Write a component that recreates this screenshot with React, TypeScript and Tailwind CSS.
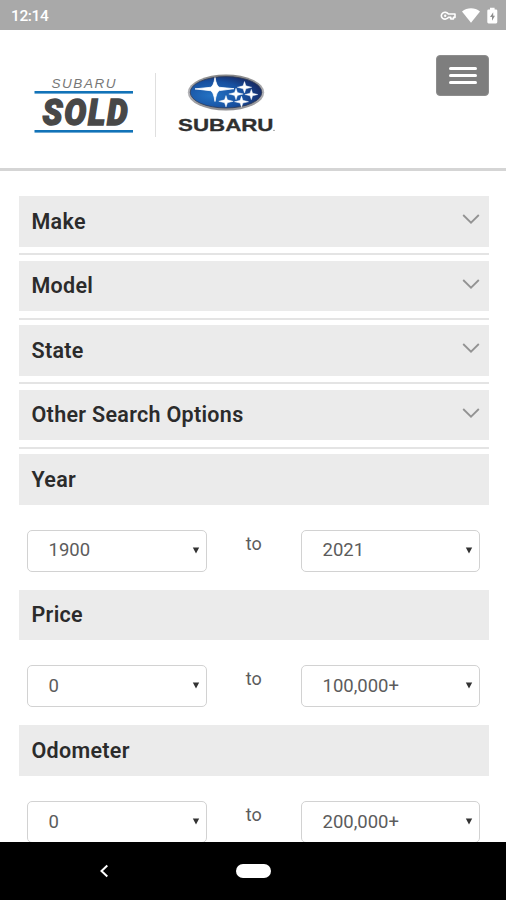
import React from "react";

interface RangeFilter {
  label: string;
  from: string;
  to: string;
}

const collapsedFilters = ["Make", "Model", "State", "Other Search Options"];

const rangeFilters: RangeFilter[] = [
  { label: "Year", from: "1900", to: "2021" },
  { label: "Price", from: "0", to: "100,000+" },
  { label: "Odometer", from: "0", to: "200,000+" },
];

const StatusBar = () => (
  <div className="flex h-[30px] shrink-0 items-center justify-between bg-[#a9a9a9] pl-[11px] pr-2 text-white">
    <span className="pt-[3px] text-[15.5px] leading-none font-medium tracking-[-0.4px]">12:14</span>
    <svg width="58" height="18" viewBox="0 0 58 18" fill="none" className="mt-px">
      {/* VPN key */}
      <path
        d="M8.400 7A3.800 3.400 0 1 0 8.400 10.400H10.800V12H13.400V10.400H15V7Z"
        stroke="#fff"
        strokeWidth="1.600"
        strokeLinejoin="round"
      />
      <circle cx="5.200" cy="8.700" r="1.200" fill="#fff" />
      {/* Wifi */}
      <path d="M22 4.600C27.200.2 34.800.2 40 4.600L31 15.800Z" fill="#fff" />
      {/* Battery */}
      <path d="M50 .8h4.600v1.700H56q1.300 0 1.300 1.300v11.300q0 1.300-1.300 1.300h-7.400q-1.300 0-1.300-1.300V3.800q0-1.300 1.300-1.300H50Z" fill="#fff" />
      <path d="M53.200 5.200 50 10h2v3.700l3-4.900h-1.800Z" fill="#8f8f8f" />
    </svg>
  </div>
);

const SoldLogo = () => (
  <svg
    width="100"
    height="64"
    viewBox="33.500 73 100 64"
    fontFamily="'Liberation Sans', sans-serif"
    className="overflow-visible"
  >
    <text x="51" y="87.500" fontSize="13.500" fontStyle="italic" fill="#777" textLength="64">
      SUBARU
    </text>
    <rect x="34" y="91" width="98.500" height="2.600" fill="#1273b8" />
    <text
      x="42"
      y="124.600"
      fontSize="37.500"
      fontFamily="Roboto, sans-serif"
      fontWeight="900"
      fontStyle="italic"
      fill="#484848"
      stroke="#484848"
      strokeWidth="1.500"
      letterSpacing="2"
      textLength="87"
      lengthAdjust="spacingAndGlyphs"
    >
      SOLD
    </text>
    <rect x="34" y="130" width="98.500" height="2.600" fill="#1273b8" />
  </svg>
);

const smallStars = [
  [244.500, 87.300, 7.200],
  [236, 94, 7.200],
  [251.300, 94.500, 6.500],
  [226, 101.300, 7.200],
  [241.500, 101.700, 7],
];

const SubaruLogo = () => (
  <svg width="100" height="64" viewBox="175 73 100 64" className="overflow-visible">
    <defs>
      <linearGradient id="rim" x1="0" y1="0" x2="0" y2="1">
        <stop offset="0" stopColor="#858585" />
        <stop offset="0.5" stopColor="#b4b4b8" />
        <stop offset="1" stopColor="#8c8c90" />
      </linearGradient>
      <radialGradient id="sky" cx="0.3" cy="0.6" r="0.75">
        <stop offset="0" stopColor="#2473c4" />
        <stop offset="0.6" stopColor="#174f9f" />
        <stop offset="1" stopColor="#18265e" />
      </radialGradient>
    </defs>
    <ellipse cx="226" cy="92.500" rx="38.200" ry="18" fill="url(#rim)" />
    <ellipse cx="226" cy="92.300" rx="35.800" ry="15.700" fill="url(#sky)" stroke="#303b55" strokeWidth="0.8" />
    <path
      d="M215 77.500Q216.500 86.500 219.500 87.300L234 88.700 219.500 90.600Q216.500 91.500 215 101.500Q213.500 91.500 210.500 90.700L195 88.900 210.500 87.300Q213.500 86.500 215 77.500Z"
      fill="#fff"
      stroke="#fff"
      strokeWidth="0.8"
    />
    {smallStars.map(([x, y, r]) => (
      <path
        key={`${x}-${y}`}
        transform={`translate(${x} ${y}) scale(${r})`}
        d="M0-.8 .2-.2 1 0 .2 .2 0 .8-.2 .2-1 0-.2-.2Z"
        fill="#fff"
        stroke="#fff"
        strokeWidth="0.06"
      />
    ))}
    <text
      x="178"
      y="130.500"
      fontSize="17"
      fontFamily="'Liberation Sans', sans-serif"
      fontWeight="700"
      fill="#2f2f2f"
      stroke="#2f2f2f"
      strokeWidth="0.3"
      textLength="95.500"
      lengthAdjust="spacingAndGlyphs"
    >
      SUBARU
    </text>
    <circle cx="274" cy="130.300" r="0.600" fill="#555" />
  </svg>
);

const Header = () => (
  <header className="flex h-[141px] shrink-0 items-start justify-between border-b-[3px] border-[#d5d5d5] bg-white pr-[17px] pl-[34px]">
    <div className="flex items-center pt-[43px]">
      <SoldLogo />
      <div className="mr-[19px] ml-[21px] h-16 w-px bg-[#dfdfdf]" />
      <SubaruLogo />
    </div>
    <button className="mt-[25px] flex h-[41px] w-[53px] flex-col items-center justify-center gap-1 rounded-[4px] border border-[#8d8d8d] bg-[#7e7e7e]">
      <span className="h-[3px] w-7 rounded-full bg-white" />
      <span className="h-[3px] w-7 rounded-full bg-white" />
      <span className="h-[3px] w-7 rounded-full bg-white" />
    </button>
  </header>
);

const FilterTitle = ({ label, collapsible }: { label: string; collapsible?: boolean }) => (
  <div className="flex h-[50.5px] items-center justify-between bg-[#ebebeb] pr-[9px] pl-[12.5px]">
    <h2 className="text-[21.5px] leading-none font-semibold tracking-[0.3px] text-[#2b2b2b]">{label}</h2>
    {collapsible && (
      <svg width="18" height="12" viewBox="0 0 18 12" fill="none" className="-mt-[4px]">
        <path d="M1.200 2 9 9.700 16.800 2" stroke="#939393" strokeWidth="1.800" />
      </svg>
    )}
  </div>
);

const SelectBox = ({ value }: { value: string }) => (
  <button className="flex h-[42px] w-[179.5px] items-center justify-between rounded-[5px] border border-[#d2d2d2] bg-white pr-[6px] pl-[20.5px] text-[#5c5c5c]">
    <span className="text-[18.5px] leading-none">{value}</span>
    <svg width="8" height="8" viewBox="0 0 8 8">
      <path d="M.8.500h6.400L4 6.500Z" fill="#333" />
    </svg>
  </button>
);

export default function App() {
  return (
    <div className="flex h-[900px] w-[506px] flex-col overflow-hidden bg-white font-[Roboto,sans-serif]">
      <StatusBar />
      <Header />

      <main className="min-h-0 flex-1 overflow-hidden pt-[25px] pr-[17px] pl-[19px]">
        {/* Collapsed filters */}
        {collapsedFilters.map((label) => (
          <div key={label} className="h-[64.5px]">
            <FilterTitle label={label} collapsible />
            <div className="mt-[6.5px] h-[2px] bg-[#e4e4e4]" />
          </div>
        ))}

        {/* Range filters */}
        {rangeFilters.map(({ label, from, to }) => (
          <div key={label} className="h-[135.7px]">
            <FilterTitle label={label} />
            <div className="flex items-start justify-between pt-[25px] pr-[8.5px] pl-[8px]">
              <SelectBox value={from} />
              <span className="pt-[5px] text-[18px] leading-none text-[#5c5c5c]">to</span>
              <SelectBox value={to} />
            </div>
          </div>
        ))}
      </main>

      {/* Android navigation */}
      <nav className="flex h-[58px] shrink-0 items-center bg-black pl-[99px]">
        <svg width="10" height="14" viewBox="0 0 10 14" fill="none">
          <path d="M8.300 1.500 2.500 7l5.800 5.500" stroke="#fff" strokeWidth="2" />
        </svg>
        <div className="ml-[127px] h-[14px] w-[35px] rounded-full bg-white" />
      </nav>
    </div>
  );
}
